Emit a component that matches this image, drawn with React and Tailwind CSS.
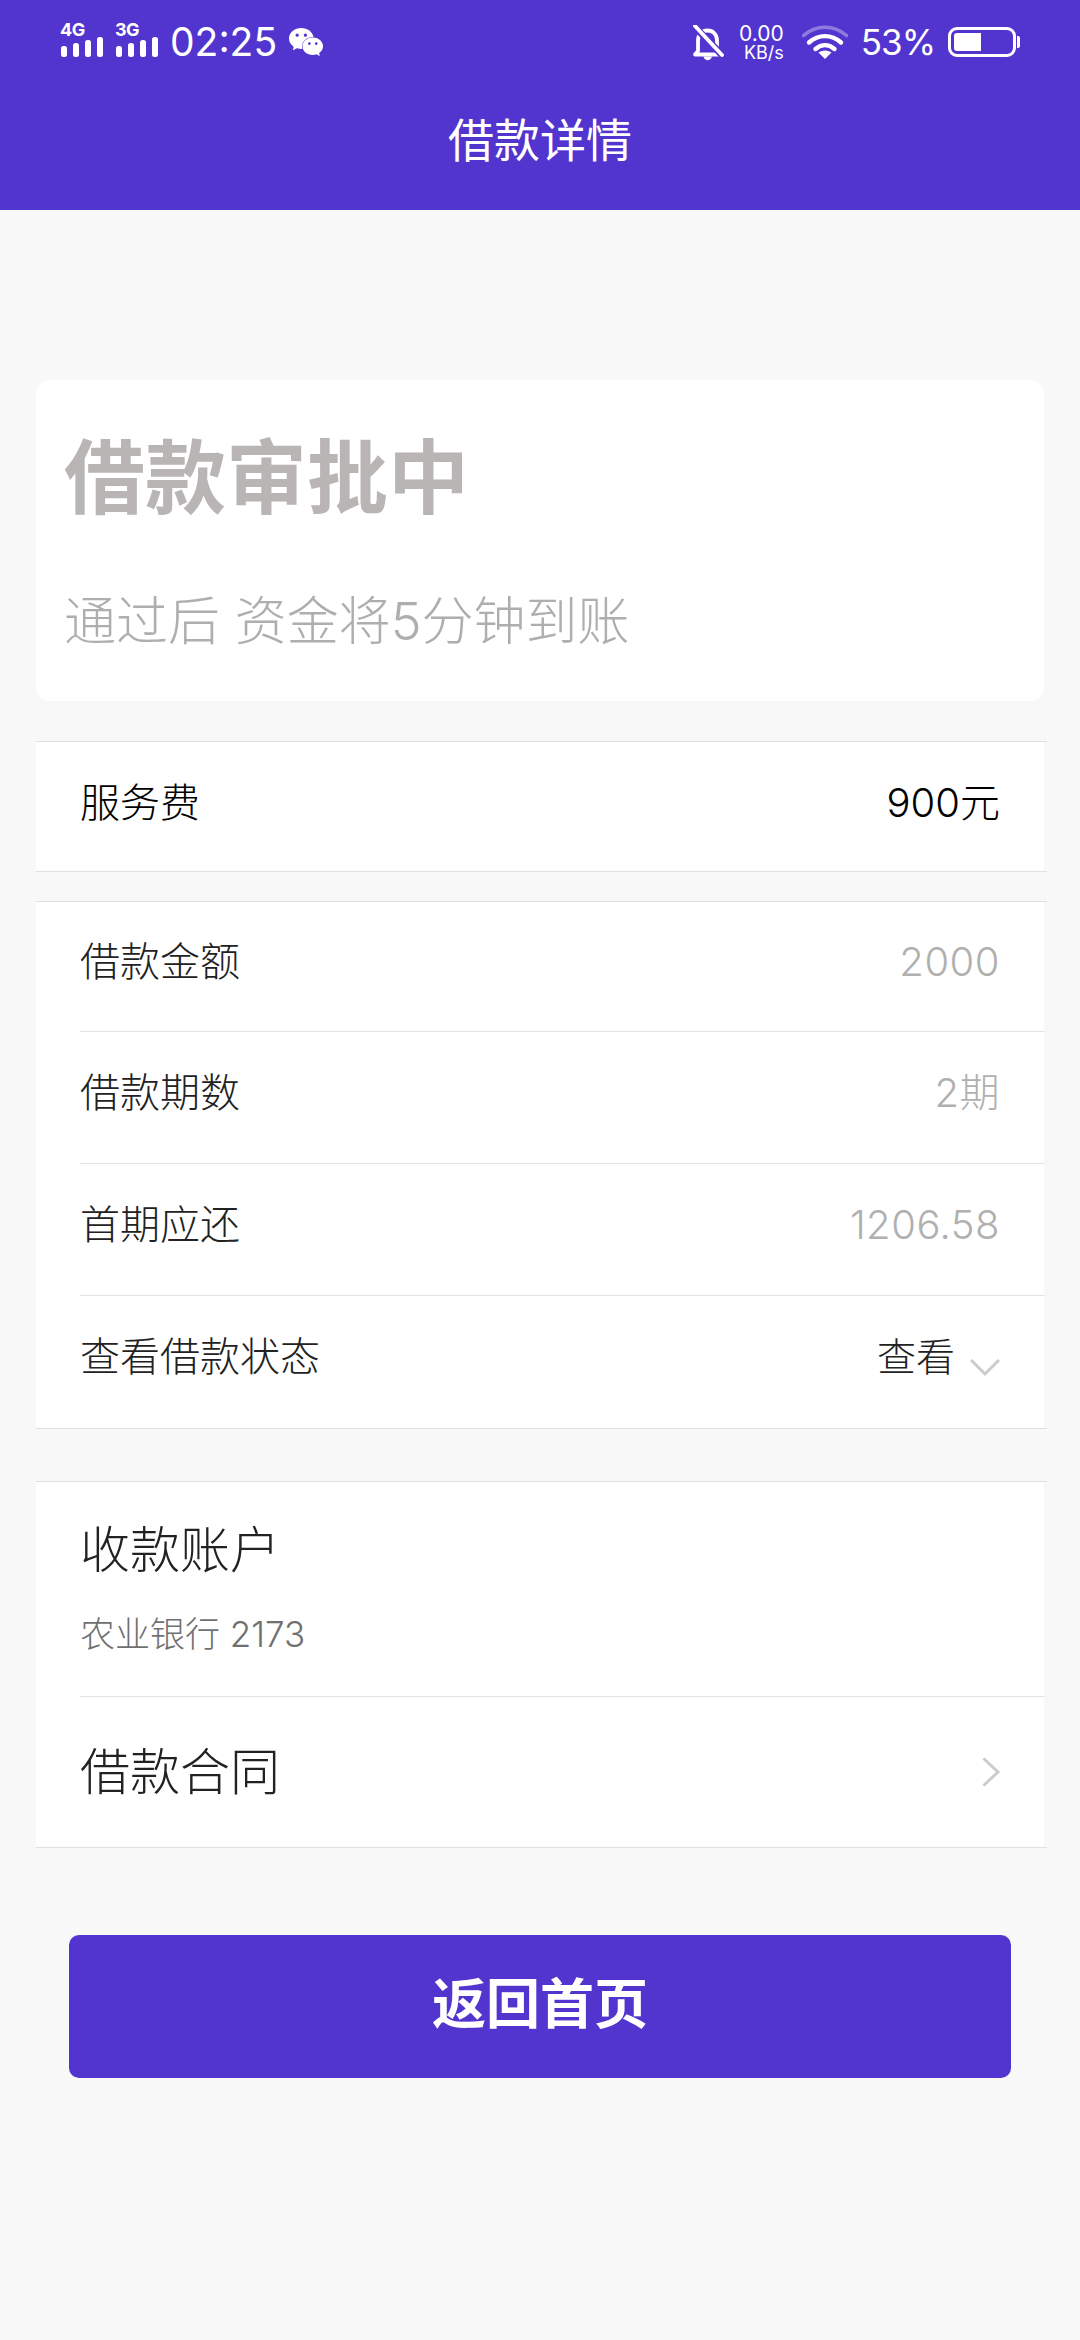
import React from "react";
import { SiWechat } from "react-icons/si";

const SANS = "font-['Inter','Noto_Sans_CJK_SC',sans-serif]";

function SignalBars() {
  return (
    <svg width="44" height="20" viewBox="0 0 44 20" fill="#fff" className="block">
      <rect x="1" y="9" width="6" height="11" rx="2.5" />
      <rect x="13" y="6" width="6" height="14" rx="2.5" />
      <rect x="25" y="3" width="6" height="17" rx="2.5" />
      <rect x="37" y="0" width="6" height="20" rx="2.5" />
    </svg>
  );
}

function Signal({ label }) {
  return (
    <div className="flex w-[44px] flex-col">
      <span className="text-[18px] leading-[14px] font-bold tracking-[-0.5px] text-white">{label}</span>
      <SignalBars />
    </div>
  );
}

function BellMuted() {
  return (
    <svg width="32" height="36" viewBox="0 0 32 36" fill="none" className="block">
      <path
        d="M6 26V15.5C6 9.5 10 5.5 15.5 5.5S25 9.5 25 15.5V26l3 3.5H3z"
        stroke="#fff"
        strokeWidth="3.8"
        strokeLinejoin="round"
      />
      <path d="M11.5 31.5c.6 2.6 2.3 3.8 4.2 3.8s3.6-1.2 4.2-3.8z" fill="#fff" />
      <path d="M2 1l29 30" stroke="#5235cf" strokeWidth="7" />
      <path d="M3 1l27 29" stroke="#fff" strokeWidth="3.8" strokeLinecap="round" />
    </svg>
  );
}

function Wifi() {
  return (
    <svg width="46" height="34" viewBox="0 0 46 34" fill="none" className="block">
      <path d="M1.5 10.5C14 -0.5 32 -0.5 44.5 10.5" stroke="#fff" strokeOpacity="0.35" strokeWidth="3.6" strokeLinecap="round" />
      <path d="M7 17.5C16.5 9 29.5 9 39 17.5" stroke="#fff" strokeWidth="4.4" strokeLinecap="round" />
      <path d="M13.5 24C19.5 18.8 26.5 18.8 32.5 24" stroke="#fff" strokeWidth="4.4" strokeLinecap="round" />
      <path d="M16.5 27.5c3.8-2.8 9.2-2.8 13 0L23 34z" fill="#fff" />
    </svg>
  );
}

function Battery() {
  return (
    <div className="flex items-center">
      <div className="flex h-[30px] w-[68px] rounded-[9px] border-[3px] border-white p-[3px]">
        <div className="h-full w-[27px] rounded-l-[3px] bg-white" />
      </div>
      <div className="ml-[1px] h-[12px] w-[3px] rounded-r-[2px] bg-white" />
    </div>
  );
}

function StatusBar() {
  return (
    <div className="flex h-[84px] items-start pt-[23px] pr-[60px] pl-[60px] text-white">
      <Signal label="4G" />
      <div className="ml-[11px]">
        <Signal label="3G" />
      </div>
      <span className="ml-[11px] text-[39px] leading-[38px] font-normal">02:25</span>
      <SiWechat className="mt-[2px] ml-[12px] text-[34px]" />
      <div className="mt-[2px] ml-auto">
        <BellMuted />
      </div>
      <div className="mt-[1px] ml-[14px] flex w-[46px] flex-col items-end">
        <span className="text-[21px] leading-[20px] font-normal">0.00</span>
        <span className="text-[18px] leading-[17px] font-normal">KB/s</span>
      </div>
      <div className="mt-[2px] ml-[18px]">
        <Wifi />
      </div>
      <span className="ml-[13px] text-[35px] leading-[38px] font-normal tracking-[-1px]">53%</span>
      <div className="mt-[4px] ml-[13px]">
        <Battery />
      </div>
    </div>
  );
}

function Row({ label, value, last, height = "h-[132px]", children }) {
  return (
    <div className="pl-[44px]">
      <div className={`flex ${height} items-center justify-between pr-[44px] pb-[10px] ${last ? "" : "border-b border-[#e2e2e2]"}`}>
        <span className="text-[40px] font-light text-[#222222]">{label}</span>
        {children || <span className="text-[40px] font-light tracking-[0.5px] text-[#b0b0b0]">{value}</span>}
      </div>
    </div>
  );
}

function Chevron({ d, w, h }) {
  return (
    <svg width={w} height={h} viewBox={`0 0 ${w} ${h}`} fill="none" stroke="#cccccc" strokeWidth="3" className="block">
      <path d={d} />
    </svg>
  );
}

const sectionCls = "border-y border-[#e0e0e0] bg-white bg-clip-content pr-[3px]";

export default function App() {
  return (
    <div className={`min-h-screen bg-[#f8f8f8] ${SANS}`}>
      <header className="h-[210px] bg-[#5235cf]">
        <StatusBar />
        <h1 className="pt-[30px] text-center text-[46px] leading-[52px] font-normal text-white">借款详情</h1>
      </header>

      <main className="pt-[170px] pr-[33px] pl-[36px]">
        <section className="mr-[3px] flex h-[321px] flex-col rounded-[14px] bg-white pl-[28px]">
          <h2 className="mt-[43px] text-[81px] leading-[110px] font-bold text-[#bab5b5]">借款审批中</h2>
          <p className="mt-[54px] text-[52px] leading-[70px] font-light text-[#b0adad]">通过后 资金将5分钟到账</p>
        </section>

        <section className={`mt-[40px] ${sectionCls}`}>
          <div className="flex h-[129px] items-center justify-between pr-[44px] pb-[8px] pl-[44px] text-[40px] font-light text-black">
            <span>服务费</span>
            <span>900元</span>
          </div>
        </section>

        <section className={`mt-[29px] ${sectionCls}`}>
          <Row label="借款金额" value="2000" height="h-[130px]" />
          <Row label="借款期数" value="2期" />
          <Row label="首期应还" value="1206.58" />
          <Row label="查看借款状态" last>
            <div className="flex items-center">
              <span className="text-[39px] font-light text-[#222222]">查看</span>
              <div className="mt-[22px] ml-[15px]">
                <Chevron w={30} h={18} d="M1 1l14 14L29 1" />
              </div>
            </div>
          </Row>
        </section>

        <section className={`mt-[52px] ${sectionCls}`}>
          <div className="pl-[44px]">
            <div className="h-[215px] border-b border-[#e2e2e2] pt-[33px]">
              <p className="text-[50px] leading-[70px] font-light text-[#222222]">收款账户</p>
              <p className="mt-[25px] text-[35px] leading-[48px] font-light text-[#707070]">农业银行 2173</p>
            </div>
            <div className="flex h-[150px] items-center justify-between pr-[44px]">
              <span className="text-[50px] font-light text-[#222222]">借款合同</span>
              <Chevron w={18} h={30} d="M1.5 1.5L16 15 1.5 28.5" />
            </div>
          </div>
        </section>

        <button className="mt-[87px] ml-[33px] flex h-[143px] w-[942px] items-center justify-center rounded-[10px] bg-[#5235cf] pb-[4px] text-[54px] font-bold text-white">
          返回首页
        </button>
      </main>
    </div>
  );
}
